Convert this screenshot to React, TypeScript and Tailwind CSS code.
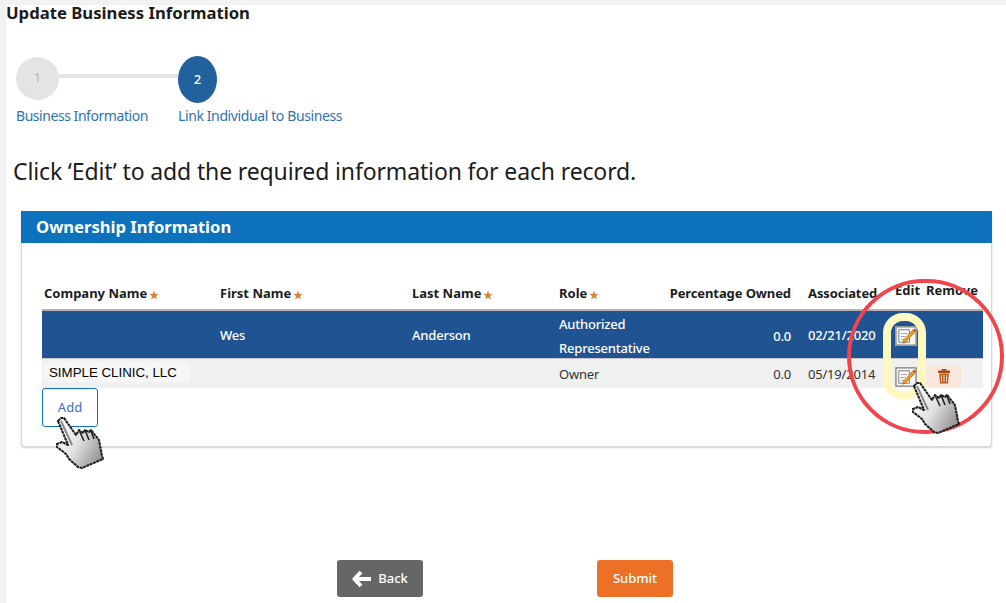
import React from "react";

function Star() {
  return (
    <svg width="10" height="10" viewBox="0 0 10 10" className="ml-[2px] mt-[3px] shrink-0">
      <path d="M5 0.5 6.2 3.8 9.7 3.9 6.9 6 8 9.5 5 7.4 2 9.5 3.1 6 .3 3.9 3.8 3.8Z" fill="#d0863c" />
    </svg>
  );
}

function Hand({ className }: { className: string }) {
  return (
    <svg width="52" height="54" viewBox="0 0 52 54" className={className}>
      <defs>
        <linearGradient id="handFill" x1="0" y1="0" x2="1" y2="0.6">
          <stop offset="0" stopColor="#ffffff" />
          <stop offset="0.55" stopColor="#e2e2e2" />
          <stop offset="1" stopColor="#9c9c9c" />
        </linearGradient>
      </defs>
      <path
        d="M4 5 7 2 10 2 22 19 25 14 29 17 31 14 35 16 37 14 41 19 45 24 48 40 49 43 28 52 24 51 15 43 12 38 3 31 3 28 8 26 14 29Z"
        fill="url(#handFill)"
        stroke="#1a1a1a"
        strokeWidth="2"
        strokeDasharray="3 0.6"
        strokeLinejoin="round"
      />
      <path d="M25 14 30 25M31 14 35 24M37 15 40 23" stroke="#222" strokeWidth="1.6" fill="none" />
      <path d="M7 5 18 29" stroke="#8a8a8a" strokeWidth="2" fill="none" />
    </svg>
  );
}

function EditIcon() {
  return (
    <svg width="22" height="20" viewBox="0 0 23 21" className="block">
      <rect x="0" y="0" width="23" height="21" fill="#c9c9c9" />
      <rect x="1" y="1" width="21" height="19" fill="#f4f4f4" stroke="#6d6d6d" />
      <path d="M4 4H15V17H4Z" fill="#fff" stroke="#777" strokeWidth="1" />
      <path d="M6 8H13M6 11H11M6 14H10" stroke="#999" strokeWidth="1" />
      <path d="M9 15 8 18 11 17 21 6 19 4Z" fill="#f0a020" stroke="#9a5b10" strokeWidth=".7" />
      <path d="M19 4 21 6 22 4.5 20.5 3Z" fill="#d8342c" />
    </svg>
  );
}

function TrashIcon() {
  return (
    <svg width="14" height="16" viewBox="0 0 14 16">
      <path d="M5 1.5H9V3H5Z" fill="none" stroke="#a84a14" strokeWidth="1" />
      <rect x="1" y="2.5" width="12" height="2.5" rx=".6" fill="#a84a14" />
      <path d="M2.2 5.5H11.8L11 15.5H3Z" fill="#b85a20" />
      <path d="M4.5 7V14M7 7V14M9.5 7V14" stroke="#f6dcc8" strokeWidth="1" />
    </svg>
  );
}

const grid = "grid grid-cols-[178px_192px_147px_232px_104px_31px_57px]";

export default function App() {
  return (
    <div className="relative w-[1006px] h-[603px] overflow-hidden bg-[#f2f2f2] pl-[6px] pt-[5px] font-['Noto_Sans',sans-serif] text-[#1a1a1a]">
      <div className="h-[598px] bg-white">
        <h1 className="text-[16.7px] leading-[16px] font-bold text-[#1c1c1c]">Update Business Information</h1>

        <div className="relative ml-[10px] mt-[35px] flex h-[47px] w-[201px] items-center">
          <div className="flex h-[43px] w-[43px] mt-[-3px] shrink-0 items-center justify-center rounded-full bg-[#e4e4e4] text-[13px] text-[#b0b4b8]">1</div>
          <div className="mt-[-8px] h-[4px] w-[119px] bg-[#e5e5e5]" />
          <div className="flex h-[47px] w-[39px] shrink-0 items-center justify-center rounded-[50%] bg-[#21619d] text-[13px] font-medium text-white">2</div>
        </div>
        <div className="ml-[10px] mt-[3px] flex text-[14px] leading-[20px] text-[#2f72ad]">
          <span className="w-[162px] tracking-[-0.45px]">Business Information</span>
          <span className="tracking-[-0.39px]">Link Individual to Business</span>
        </div>

        <p className="ml-[7px] mt-[30px] text-[23px] leading-[30px] tracking-[-0.14px] text-[#1c1c1c]">
          Click ‘Edit’ to add the required information for each record.
        </p>

        <div className="ml-[15px] mt-[25px] h-[236px] w-[971px] rounded-[4px] border-x border-b border-[#d8d8d8] bg-white shadow-[0_1px_2px_rgba(0,0,0,0.2)]">
          <div className="-mx-px flex h-[32px] items-center bg-[#0d72bb] pl-[15px] text-[16.6px] font-bold text-white">
            Ownership Information
          </div>
          <div className="pl-[20px]">
            <div className={`${grid} mt-[34px] h-[34px] w-[941px] border-b-2 border-[#b4b4b4] text-[13px] font-bold leading-[32px] text-[#1c1c1c]`}>
              <div className="flex pl-[2px]"><span>Company Name</span><span className="mt-[10px]"><Star /></span></div>
              <div className="flex"><span>First Name</span><span className="mt-[10px]"><Star /></span></div>
              <div className="flex"><span>Last Name</span><span className="mt-[10px]"><Star /></span></div>
              <div className="relative flex"><span>Role</span><span className="mt-[10px]"><Star /></span><span className="absolute right-0 top-0 tracking-[-0.1px]">Percentage Owned</span></div>
              <div className="pl-[17px] whitespace-nowrap tracking-[-0.1px]">Associated</div>
              <div className="mt-[-3px] whitespace-nowrap">Edit</div>
              <div className="mt-[-3px] whitespace-nowrap">Remove</div>
            </div>
            <div className={`${grid} h-[47px] w-[941px] items-center bg-[#205391] pt-[1px] text-[13px] font-medium tracking-[-0.2px] text-white`}>
              <div />
              <div>Wes</div>
              <div>Anderson</div>
              <div className="relative leading-[24px]">
                Authorized<br />Representative
                <span className="absolute right-0 top-[12px]">0.0</span>
              </div>
              <div className="pl-[17px]">02/21/2020</div>
              <div><EditIcon /></div>
              <div />
            </div>
            <div className="h-px w-[941px] bg-[#c8c8c8]" />
            <div className={`${grid} h-[29px] w-[941px] items-center bg-[#f0f0f0] text-[13px] tracking-[-0.2px] text-[#333]`}>
              <div className="mt-[-2px] pl-[2px]">
                <div className="h-[19px] w-[146px] bg-[#f6f6f6] pl-[5px] font-['Liberation_Sans',sans-serif] text-[13.3px] leading-[19px] tracking-normal text-black">SIMPLE CLINIC, LLC</div>
              </div>
              <div />
              <div />
              <div className="relative mt-[2px]">
                Owner
                <span className="absolute right-0 top-0">0.0</span>
              </div>
              <div className="mt-[2px] pl-[17px]">05/19/2014</div>
              <div className="mt-[7px]"><EditIcon /></div>
              <div className="mt-[5px] flex h-[21px] w-[35px] items-center justify-center bg-[#f9e6dc]"><TrashIcon /></div>
            </div>
            <button className="flex h-[39px] w-[56px] items-center justify-center rounded-[3px] border border-[#0d72bb] bg-white text-[13px] text-[#3b6fc0]">Add</button>
          </div>
        </div>

        <div className="mt-[113px] flex">
          <button className="ml-[331px] flex h-[37px] w-[86px] items-center justify-center gap-[6px] rounded-[3px] bg-[#666666] text-[13px] font-medium text-white">
            <svg width="20" height="18" viewBox="0 0 20 18"><path d="M9 2 2.5 9 9 16M3 9H19" fill="none" stroke="#fff" strokeWidth="4" strokeLinejoin="round" /></svg>
            Back
          </button>
          <button className="ml-[174px] h-[37px] w-[76px] rounded-[3px] bg-[#ec7025] text-[13px] font-medium text-white">Submit</button>
        </div>
      </div>

      <div className="absolute left-[883px] top-[313px] h-[86px] w-[43px] rounded-[20px] border-[8px] border-[#fdf7c0]" />
      <div className="absolute left-[847px] top-[279px] h-[155px] w-[157px] rounded-full border-[4px] border-[#f0454b]" />
      <Hand className="absolute left-[910px] top-[381px]" />
      <Hand className="absolute left-[54px] top-[416px]" />
    </div>
  );
}
